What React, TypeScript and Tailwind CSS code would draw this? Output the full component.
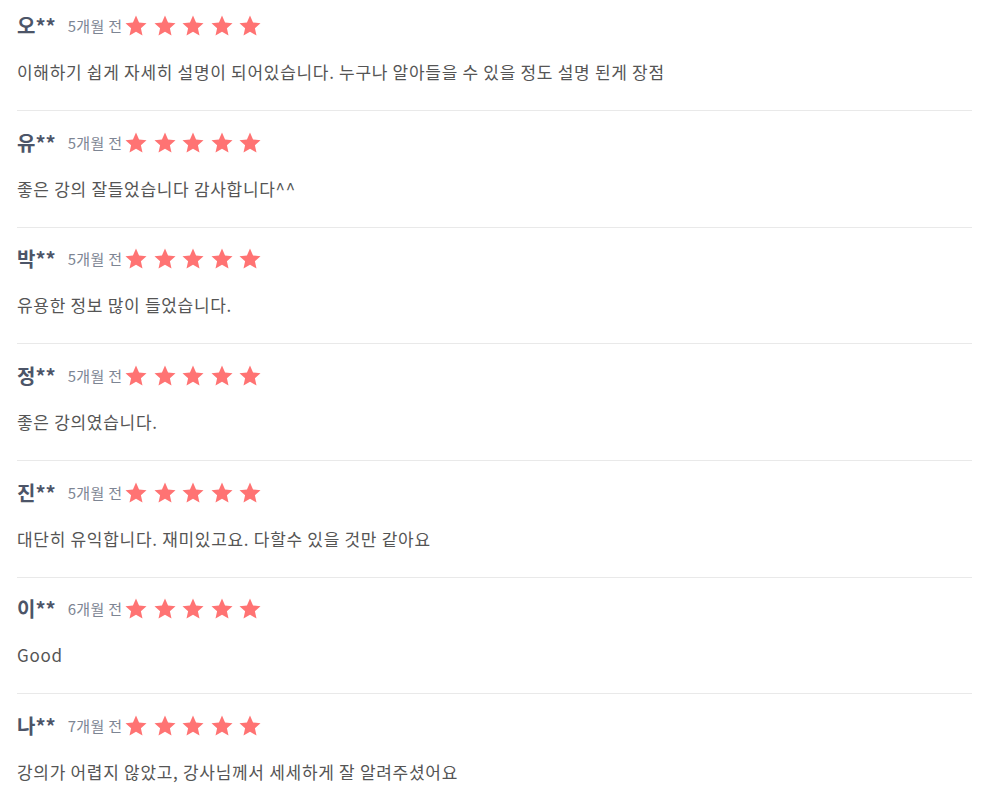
const reviews = [
  { name: "오**", ago: "5개월 전", text: "이해하기 쉽게 자세히 설명이 되어있습니다. 누구나 알아들을 수 있을 정도 설명 된게 장점" },
  { name: "유**", ago: "5개월 전", text: "좋은 강의 잘들었습니다 감사합니다^^" },
  { name: "박**", ago: "5개월 전", text: "유용한 정보 많이 들었습니다." },
  { name: "정**", ago: "5개월 전", text: "좋은 강의였습니다." },
  { name: "진**", ago: "5개월 전", text: "대단히 유익합니다. 재미있고요. 다할수 있을 것만 같아요" },
  { name: "이**", ago: "6개월 전", text: "Good" },
  { name: "나**", ago: "7개월 전", text: "강의가 어렵지 않았고, 강사님께서 세세하게 잘 알려주셨어요" },
];

function Star() {
  return (
    <svg viewBox="0 0 24 24" className="h-[24px] w-[24px]" aria-hidden>
      <path
        fill="#ff7373"
        d="M12 1.6l3.05 6.85 7.45.75-5.6 5 1.6 7.35L12 17.7l-6.5 3.85 1.6-7.35-5.6-5 7.45-.75z"
      />
    </svg>
  );
}

export default function App() {
  return (
    <div className="min-h-[799px] bg-white px-[17px] font-['Noto_Sans_CJK_KR','Noto_Sans',sans-serif]">
      <ul className="w-[955px]">
        {reviews.map((r, i) => (
          <li
            key={i}
            className="border-b border-[#e9e9e9] pb-[26px] pt-[19.67px] first:pt-[14px] last:border-b-0"
          >
            <div className="flex h-[24px] items-center">
              <span className="text-[20px] font-bold leading-[24px] text-[#4c5568]">{r.name}</span>
              <span className="ml-[12px] text-[15px] tracking-[0.3px] leading-[24px] text-[#7d8593]">{r.ago}</span>
              <div className="ml-[2px] flex gap-[4.5px]">
                {[0, 1, 2, 3, 4].map((s) => (
                  <Star key={s} />
                ))}
              </div>
            </div>
            <p className="mt-[22px] text-[17px] tracking-[0.7px] leading-[24px] text-[#555555]">{r.text}</p>
          </li>
        ))}
      </ul>
    </div>
  );
}
